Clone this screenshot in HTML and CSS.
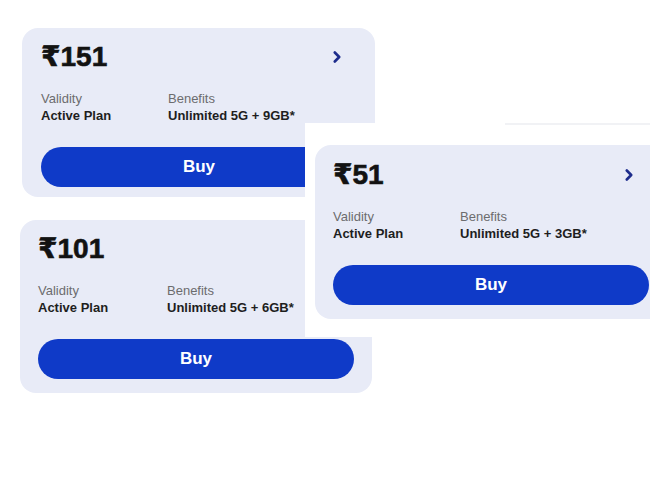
FILE: index.html
```html
<!DOCTYPE html>
<html lang="en">
<head>
<meta charset="utf-8">
<title>Plans</title>
<link rel="stylesheet" href="styles.css">
</head>
<body>
<div class="page">
  <div class="stack">
    <div class="card card-a">
      <div class="head">
        <span class="price">₹151</span>
        <svg class="chev" width="8" height="12" viewBox="0 0 8 12"><polyline points="1.8,1.5 6.2,6 1.8,10.5" fill="none" stroke="#1d2c8c" stroke-width="2.6" stroke-linecap="round" stroke-linejoin="round"/></svg>
      </div>
      <div class="info">
        <div class="col"><span class="lbl">Validity</span><span class="val">Active Plan</span></div>
        <div class="col"><span class="lbl">Benefits</span><span class="val">Unlimited 5G + 9GB*</span></div>
      </div>
      <button class="buy">Buy</button>
    </div>
    <div class="card card-b">
      <div class="head">
        <span class="price">₹101</span>
        <svg class="chev" width="8" height="12" viewBox="0 0 8 12"><polyline points="1.8,1.5 6.2,6 1.8,10.5" fill="none" stroke="#1d2c8c" stroke-width="2.6" stroke-linecap="round" stroke-linejoin="round"/></svg>
      </div>
      <div class="info">
        <div class="col"><span class="lbl">Validity</span><span class="val">Active Plan</span></div>
        <div class="col"><span class="lbl">Benefits</span><span class="val">Unlimited 5G + 6GB*</span></div>
      </div>
      <button class="buy">Buy</button>
    </div>
  </div>
  <div class="panel">
    <div class="card card-c">
      <div class="head">
        <span class="price">₹51</span>
        <svg class="chev" width="8" height="12" viewBox="0 0 8 12"><polyline points="1.8,1.5 6.2,6 1.8,10.5" fill="none" stroke="#1d2c8c" stroke-width="2.6" stroke-linecap="round" stroke-linejoin="round"/></svg>
      </div>
      <div class="info">
        <div class="col"><span class="lbl">Validity</span><span class="val">Active Plan</span></div>
        <div class="col"><span class="lbl">Benefits</span><span class="val">Unlimited 5G + 3GB*</span></div>
      </div>
      <button class="buy">Buy</button>
    </div>
  </div>
</div>
</body>
</html>
```
FILE: styles.css
```css
html, body {
  margin: 0;
  padding: 0;
  background: #ffffff;
  overflow: hidden;
}
body {
  width: 650px;
  height: 480px;
  font-family: "Liberation Sans", "DejaVu Sans", Arial, sans-serif;
}
.page {
  position: relative;
  width: 650px;
  height: 480px;
}
.stack {
  display: flex;
  flex-direction: column;
  align-items: flex-start;
  gap: 23px;
  padding-top: 28px;
}
.card {
  box-sizing: border-box;
  width: 352px;
  background: #e8ebf7;
  border-radius: 16px;
  padding: 12px 18px 14px 18px;
  display: flex;
  flex-direction: column;
}
.card-a {
  margin-left: 22px;
  width: 353px;
  padding-left: 19px;
  padding-bottom: 10px;
}
.card-b {
  margin-left: 20px;
}
.card-b .info {
  grid-template-columns: 129px 1fr;
}
.card-c {
  padding-top: 13px;
}
.head {
  display: flex;
  justify-content: space-between;
  align-items: center;
  height: 34px;
  padding-right: 16px;
}
.price {
  font-size: 28px;
  line-height: 34px;
  font-weight: 700;
  color: #121212;
  -webkit-text-stroke: 0.6px #121212;
}
.chev {
  display: block;
}
.info {
  display: grid;
  grid-template-columns: 127px 1fr;
  margin-top: 16px;
}
.col {
  display: flex;
  flex-direction: column;
}
.lbl {
  font-size: 13px;
  line-height: 17px;
  color: #6c6c6e;
}
.val {
  font-size: 13px;
  line-height: 17px;
  font-weight: 700;
  color: #1e1e1e;
}
.buy {
  margin-top: 23px;
  height: 40px;
  border: none;
  border-radius: 20px;
  background: #0f3ac8;
  color: #ffffff;
  font-family: "Liberation Sans", Arial, sans-serif;
  font-size: 17px;
  font-weight: 700;
  padding: 0;
  width: 100%;
}
.panel {
  position: absolute;
  left: 305px;
  top: 123px;
  width: 360px;
  height: 214px;
  background: #ffffff;
  box-sizing: border-box;
  padding: 22px 0 0 10px;
}
.panel::before {
  content: "";
  position: absolute;
  left: 200px;
  right: 0;
  top: 0;
  height: 2px;
  background: #f1f2f5;
}
```
